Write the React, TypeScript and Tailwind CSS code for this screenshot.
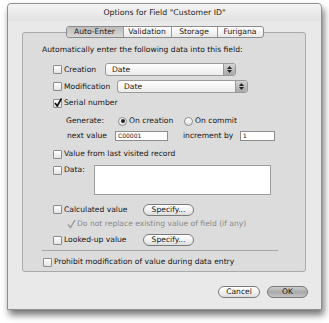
import React from "react";

// Small Aqua-like controls, drawn at the scaled-down size of the screenshot
function CheckBox({ checked = false, disabled = false }: { checked?: boolean; disabled?: boolean }) {
  if (disabled) {
    // disabled + checked: only the grey tick is visible
    return (
      <svg width="9" height="10" viewBox="0 0 9 10" className="shrink-0">
        <path d="M1 5.5 L3.5 8.5 L8 1" fill="none" stroke="#9a9a9a" strokeWidth="1.4" />
      </svg>
    );
  }
  return (
    <span className="relative flex h-[9px] w-[9px] shrink-0 items-center justify-center rounded-[1px] border border-[#8c8c8c] bg-gradient-to-b from-white to-[#e4e4e4]">
      {checked && (
        <svg width="8" height="9" viewBox="0 0 8 9" className="absolute -top-[2px] left-[0px]">
          <path d="M1 5 L3.3 8 L7.5 0.5" fill="none" stroke="#111" strokeWidth="1.7" />
        </svg>
      )}
    </span>
  );
}

function Radio({ selected = false }: { selected?: boolean }) {
  return (
    <span className="flex h-[9px] w-[9px] shrink-0 items-center justify-center rounded-full border border-[#8c8c8c] bg-gradient-to-b from-white to-[#e0e0e0]">
      {selected && <span className="h-[4px] w-[4px] rounded-full bg-[#222]" />}
    </span>
  );
}

function PopUp({ value }: { value: string }) {
  return (
    <div className="flex h-[13px] w-[131px] items-stretch overflow-hidden rounded-[3px] border border-[#9a9a9a] bg-gradient-to-b from-white to-[#ececec]">
      <div className="flex flex-1 items-center pl-[6px]">{value}</div>
      <div className="flex w-[12px] flex-col items-center justify-center gap-[1px] border-l border-[#9a9a9a] bg-gradient-to-b from-[#d4d4d4] to-[#a8a8a8]">
        <svg width="5" height="3" viewBox="0 0 5 3">
          <path d="M0 3 L2.5 0 L5 3 Z" fill="#222" />
        </svg>
        <svg width="5" height="3" viewBox="0 0 5 3">
          <path d="M0 0 L2.5 3 L5 0 Z" fill="#222" />
        </svg>
      </div>
    </div>
  );
}

function PillButton({ label, def = false, width }: { label: string; def?: boolean; width: string }) {
  return (
    <div
      className={`flex h-[12px] items-center justify-center rounded-full border border-[#7a7a7a] ${width} ${
        def ? "bg-gradient-to-b from-[#cfcfcf] via-[#a9a9a9] to-[#c4c4c4]" : "bg-gradient-to-b from-white via-[#f2f2f2] to-[#dcdcdc]"
      }`}
    >
      {label}
    </div>
  );
}

export default function App() {
  return (
    <div className="h-[323px] w-[329px] bg-white pl-[7px] pt-[3px] font-['DejaVu_Sans',sans-serif] text-[7.6px] leading-none text-[#151515]">
      {/* window */}
      <div className="flex h-[307px] w-[315px] flex-col rounded-t-[4px] border border-[#8f8f8f] bg-[#e9e9e9] shadow-[2px_5px_7px_rgba(0,0,0,0.55)]">
        {/* title bar */}
        <div className="flex h-[17px] items-center justify-center rounded-t-[4px] bg-gradient-to-b from-[#f4f4f4] to-[#e2e2e2] text-[7.8px] text-[#222]">
          Options for Field "Customer ID"
        </div>

        <div className="flex flex-col pl-[14px] pr-[15px] pt-[5px]">
          {/* tabs */}
          <div className="relative z-10 flex justify-center pl-[1px]">
            <div className="flex h-[12px] overflow-hidden rounded-[3px] border border-[#8c8c8c] bg-gradient-to-b from-white to-[#e8e8e8]">
              <div className="flex w-[56px] items-center justify-center bg-gradient-to-b from-[#bdbdbd] to-[#d8d8d8]">Auto-Enter</div>
              <div className="flex w-[48px] items-center justify-center border-l border-[#9c9c9c]">Validation</div>
              <div className="flex w-[46px] items-center justify-center border-l border-[#9c9c9c]">Storage</div>
              <div className="flex w-[46px] items-center justify-center border-l border-[#9c9c9c]">Furigana</div>
            </div>
          </div>

          {/* group box */}
          <div className="-mt-[6px] flex h-[240px] w-[284px] flex-col rounded-[3px] border border-[#aaaaaa] bg-[#dcdcdc] pl-[19px] pt-[11px]">
            <div className="flex h-[12px] items-center">Automatically enter the following data into this field:</div>

            <div className="ml-[11px] mt-[7px] flex h-[13px] items-center">
              <CheckBox />
              <span className="ml-[2px] w-[41px]">Creation</span>
              <PopUp value="Date" />
            </div>

            <div className="ml-[11px] mt-[4px] flex h-[13px] items-center">
              <CheckBox />
              <span className="ml-[2px] w-[53px]">Modification</span>
              <PopUp value="Date" />
            </div>

            <div className="ml-[11px] mt-[4px] flex h-[12px] items-center">
              <CheckBox checked />
              <span className="ml-[2px]">Serial number</span>
            </div>

            <div className="ml-[24px] mt-[6px] flex h-[12px] items-center">
              <span className="w-[52px]">Generate:</span>
              <Radio selected />
              <span className="ml-[2px] w-[55px]">On creation</span>
              <Radio />
              <span className="ml-[2px]">On commit</span>
            </div>

            <div className="ml-[25px] mt-[3px] flex h-[11px] items-center">
              <span className="w-[48px]">next value</span>
              <div className="flex h-[10px] w-[53px] items-center border border-[#8c8c8c] bg-white pl-[2px] text-[6px]">C00001</div>
              <span className="ml-[15px] w-[57px]">increment by</span>
              <div className="flex h-[10px] w-[35px] items-center border border-[#8c8c8c] bg-white pl-[2px] text-[6px]">1</div>
            </div>

            <div className="ml-[11px] mt-[7px] flex h-[12px] items-center">
              <CheckBox />
              <span className="ml-[2px]">Value from last visited record</span>
            </div>

            <div className="ml-[11px] mt-[5px] flex h-[30px] items-start">
              <div className="flex h-[9px] items-center pt-[1px]">
                <CheckBox />
                <span className="ml-[2px] w-[30px]">Data:</span>
              </div>
              <div className="h-[30px] w-[177px] border border-[#9c9c9c] bg-white" />
            </div>

            <div className="ml-[11px] mt-[8px] flex h-[13px] items-center">
              <CheckBox />
              <span className="ml-[2px] w-[79px]">Calculated value</span>
              <PillButton label="Specify..." width="w-[51px]" />
            </div>

            <div className="ml-[25px] mt-[2px] flex h-[12px] items-center text-[#8a8a8a]">
              <CheckBox checked disabled />
              <span className="ml-[1px]">Do not replace existing value of field (if any)</span>
            </div>

            <div className="ml-[11px] mt-[4px] flex h-[12px] items-center">
              <CheckBox />
              <span className="ml-[2px] w-[79px]">Looked-up value</span>
              <PillButton label="Specify..." width="w-[51px]" />
            </div>

            <div className="mt-[4px] h-px w-[236px] bg-[#a6a6a6]" />

            <div className="ml-[1px] mt-[5px] flex h-[12px] items-center">
              <CheckBox />
              <span className="ml-[2px]">Prohibit modification of value during data entry</span>
            </div>
          </div>
        </div>

        {/* dialog buttons */}
        <div className="mt-[14px] flex justify-end gap-[7px] pr-[13px]">
          <PillButton label="Cancel" width="w-[42px]" />
          <PillButton label="OK" def width="w-[41px]" />
        </div>
      </div>
    </div>
  );
}
